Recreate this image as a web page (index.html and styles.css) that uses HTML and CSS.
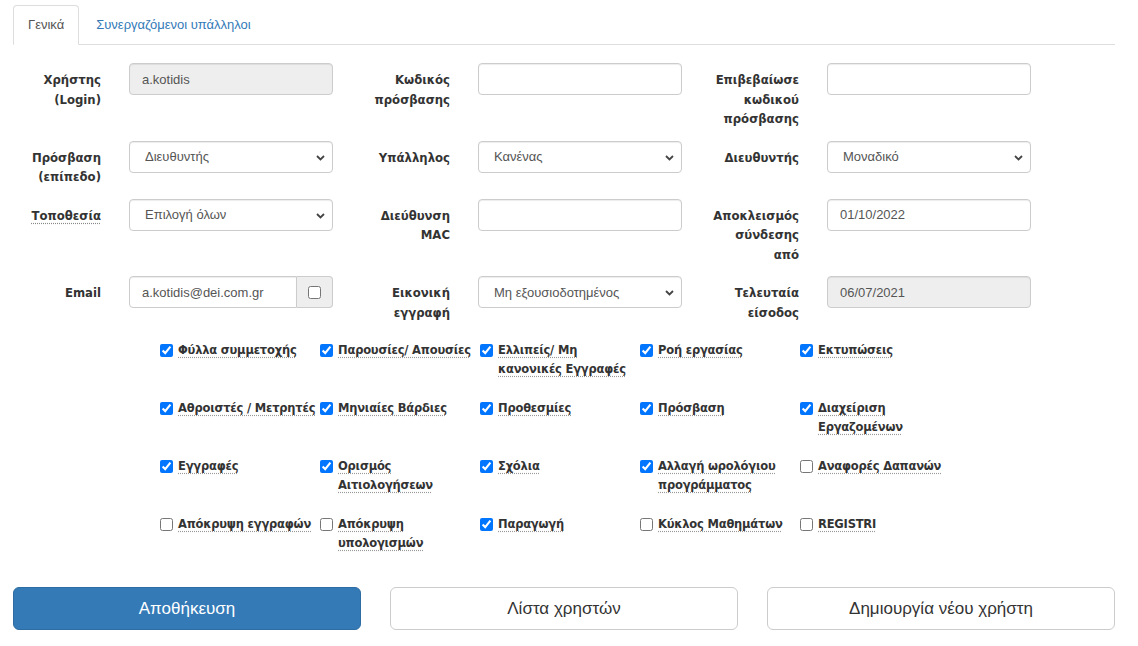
FILE: index.html
```html
<!DOCTYPE html>
<html lang="el">
<head>
    <meta charset="UTF-8">
    <title>Χρήστης</title>
    <link rel="stylesheet" href="styles.css">
</head>
<body>
    <div class="page">
        <ul class="tabs">
            <li class="tab active">Γενικά</li>
            <li class="tab">Συνεργαζόμενοι υπάλληλοι</li>
        </ul>

        <form class="form">
            <div class="row">
                <div class="field">
                    <label class="label">Χρήστης<br>(Login)</label>
                    <input class="control" type="text" value="a.kotidis" readonly>
                </div>
                <div class="field">
                    <label class="label">Κωδικός<br>πρόσβασης</label>
                    <input class="control" type="password">
                </div>
                <div class="field">
                    <label class="label">Επιβεβαίωσε<br>κωδικού<br>πρόσβασης</label>
                    <input class="control" type="password">
                </div>
            </div>

            <div class="row">
                <div class="field">
                    <label class="label">Πρόσβαση<br>(επίπεδο)</label>
                    <div class="select">
                        <select class="control"><option>Διευθυντής</option></select>
                        <svg width="9" height="6" viewBox="0 0 9 6"><path d="M1 1l3.5 3.5L8 1" fill="none" stroke="#444" stroke-width="1.8"/></svg>
                    </div>
                </div>
                <div class="field">
                    <label class="label">Υπάλληλος</label>
                    <div class="select">
                        <select class="control"><option>Κανένας</option></select>
                        <svg width="9" height="6" viewBox="0 0 9 6"><path d="M1 1l3.5 3.5L8 1" fill="none" stroke="#444" stroke-width="1.8"/></svg>
                    </div>
                </div>
                <div class="field">
                    <label class="label">Διευθυντής</label>
                    <div class="select">
                        <select class="control"><option>Μοναδικό</option></select>
                        <svg width="9" height="6" viewBox="0 0 9 6"><path d="M1 1l3.5 3.5L8 1" fill="none" stroke="#444" stroke-width="1.8"/></svg>
                    </div>
                </div>
            </div>

            <div class="row">
                <div class="field">
                    <label class="label"><span class="hint">Τοποθεσία</span></label>
                    <div class="select">
                        <select class="control"><option>Επιλογή όλων</option></select>
                        <svg width="9" height="6" viewBox="0 0 9 6"><path d="M1 1l3.5 3.5L8 1" fill="none" stroke="#444" stroke-width="1.8"/></svg>
                    </div>
                </div>
                <div class="field">
                    <label class="label">Διεύθυνση<br>MAC</label>
                    <input class="control" type="text">
                </div>
                <div class="field">
                    <label class="label">Αποκλεισμός<br>σύνδεσης<br>από</label>
                    <input class="control" type="text" value="01/10/2022">
                </div>
            </div>

            <div class="row">
                <div class="field">
                    <label class="label">Email</label>
                    <div class="group">
                        <input class="control" type="text" value="a.kotidis@dei.com.gr">
                        <span class="addon"><input type="checkbox"></span>
                    </div>
                </div>
                <div class="field">
                    <label class="label">Εικονική<br>εγγραφή</label>
                    <div class="select">
                        <select class="control"><option>Μη εξουσιοδοτημένος</option></select>
                        <svg width="9" height="6" viewBox="0 0 9 6"><path d="M1 1l3.5 3.5L8 1" fill="none" stroke="#444" stroke-width="1.8"/></svg>
                    </div>
                </div>
                <div class="field">
                    <label class="label">Τελευταία<br>είσοδος</label>
                    <input class="control" type="text" value="06/07/2021" readonly>
                </div>
            </div>

            <div class="checks">
                <label class="check"><input type="checkbox" checked><span>Φύλλα συμμετοχής</span></label>
                <label class="check"><input type="checkbox" checked><span>Παρουσίες/ Απουσίες</span></label>
                <label class="check"><input type="checkbox" checked><span>Ελλιπείς/ Μη<br>κανονικές Εγγραφές</span></label>
                <label class="check"><input type="checkbox" checked><span>Ροή εργασίας</span></label>
                <label class="check"><input type="checkbox" checked><span>Εκτυπώσεις</span></label>

                <label class="check"><input type="checkbox" checked><span>Αθροιστές / Μετρητές</span></label>
                <label class="check"><input type="checkbox" checked><span>Μηνιαίες Βάρδιες</span></label>
                <label class="check"><input type="checkbox" checked><span>Προθεσμίες</span></label>
                <label class="check"><input type="checkbox" checked><span>Πρόσβαση</span></label>
                <label class="check"><input type="checkbox" checked><span>Διαχείριση<br>Εργαζομένων</span></label>

                <label class="check"><input type="checkbox" checked><span>Εγγραφές</span></label>
                <label class="check"><input type="checkbox" checked><span>Ορισμός<br>Αιτιολογήσεων</span></label>
                <label class="check"><input type="checkbox" checked><span>Σχόλια</span></label>
                <label class="check"><input type="checkbox" checked><span>Αλλαγή ωρολόγιου<br>προγράμματος</span></label>
                <label class="check"><input type="checkbox"><span>Αναφορές Δαπανών</span></label>

                <label class="check"><input type="checkbox"><span>Απόκρυψη εγγραφών</span></label>
                <label class="check"><input type="checkbox"><span>Απόκρυψη<br>υπολογισμών</span></label>
                <label class="check"><input type="checkbox" checked><span>Παραγωγή</span></label>
                <label class="check"><input type="checkbox"><span>Κύκλος Μαθημάτων</span></label>
                <label class="check"><input type="checkbox"><span>REGISTRI</span></label>
            </div>

            <div class="actions">
                <button type="button" class="btn btn-primary">Αποθήκευση</button>
                <button type="button" class="btn">Λίστα χρηστών</button>
                <button type="button" class="btn">Δημιουργία νέου χρήστη</button>
            </div>
        </form>
    </div>
</body>
</html>
```

FILE: styles.css
```css
body {
    margin: 0;
    font-family: "Liberation Sans", Arial, sans-serif;
    font-size: 13px;
    color: #333;
    background-color: #fff;
}
.page {
    width: 1102px;
    padding: 5px 0 0 13px;
}
.tabs {
    display: flex;
    list-style: none;
    margin: 0;
    padding: 0;
    border-bottom: 1px solid #ddd;
}
.tab {
    height: 38px;
    line-height: 38px;
    padding: 0 14px;
    margin-right: 2px;
    margin-bottom: -1px;
    border: 1px solid transparent;
    border-radius: 4px 4px 0 0;
    color: #337ab7;
}
.tab.active {
    color: #555;
    background-color: #fff;
    border-color: #ddd #ddd transparent;
}
.form {
    padding-top: 18px;
}
.row {
    display: grid;
    grid-template-columns: repeat(3, 349px);
    margin-bottom: 11px;
}
.field {
    display: flex;
    align-items: flex-start;
}
.label {
    flex: none;
    width: 88px;
    margin-right: 28px;
    padding-top: 8px;
    text-align: right;
    font-family: "DejaVu Sans", Verdana, sans-serif;
    font-weight: bold;
    font-size: 11.7px;
    line-height: 19.5px;
}
.hint {
    text-decoration: underline dotted #888;
    text-underline-offset: 3px;
}
.control {
    box-sizing: border-box;
    width: 204px;
    height: 32px;
    margin: 0;
    padding: 0 12px;
    border: 1px solid #ccc;
    border-radius: 4px;
    box-shadow: inset 0 1px 1px rgba(0, 0, 0, 0.075);
    background-color: #fff;
    font-family: "Liberation Sans", Arial, sans-serif;
    font-size: 13px;
    color: #555;
}
.control[readonly] {
    background-color: #eee;
}
.select {
    position: relative;
    width: 204px;
}
.select select {
    appearance: none;
    padding: 0 28px 0 15px;
}
.select svg {
    position: absolute;
    right: 8px;
    top: 14px;
    pointer-events: none;
}
.group {
    display: flex;
    width: 204px;
}
.group .control {
    flex: 1;
    width: auto;
    min-width: 0;
    border-radius: 4px 0 0 4px;
}
.addon {
    box-sizing: border-box;
    display: flex;
    align-items: center;
    justify-content: center;
    width: 36px;
    height: 32px;
    border: 1px solid #ccc;
    border-left: none;
    border-radius: 0 4px 4px 0;
    background-color: #eee;
}
.addon input {
    margin: 0;
    width: 13px;
    height: 13px;
}
.checks {
    display: grid;
    grid-template-columns: repeat(5, 160px);
    grid-auto-rows: 38px;
    row-gap: 20px;
    margin: 17.5px 0 0 147px;
}
.check {
    display: flex;
    align-items: flex-start;
    gap: 5px;
    white-space: nowrap;
    font-family: "DejaVu Sans", Verdana, sans-serif;
    font-weight: bold;
    font-size: 11.5px;
    letter-spacing: -0.2px;
    line-height: 19px;
}
.check input {
    flex: none;
    width: 13px;
    height: 13px;
    margin: 3px 0 0;
}
.check span {
    text-decoration: underline dotted #999;
    text-underline-offset: 3px;
}
.actions {
    display: grid;
    grid-template-columns: repeat(3, 348px);
    column-gap: 29px;
    margin-top: 34.5px;
}
.btn {
    height: 43px;
    border: 1px solid #ccc;
    border-radius: 6px;
    background-color: #fff;
    color: #333;
    font-family: "Liberation Sans", Arial, sans-serif;
    font-size: 17px;
    cursor: pointer;
}
.btn-primary {
    background-color: #337ab7;
    border-color: #2e6da4;
    color: #fff;
}
```
